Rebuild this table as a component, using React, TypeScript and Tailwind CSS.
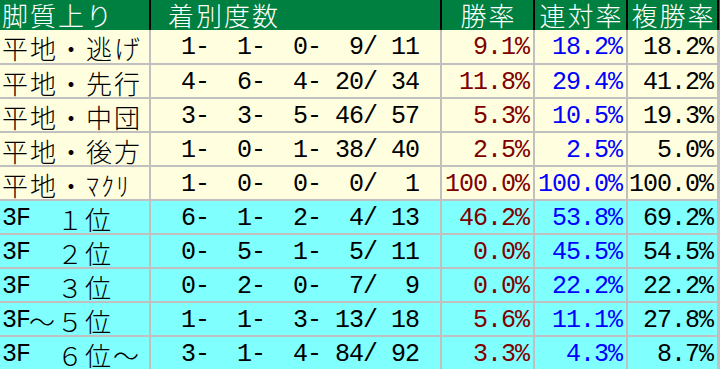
const jp = "font-['MS_Gothic','Noto_Sans_CJK_JP',sans-serif] font-light";
const mono = "font-['Liberation_Mono',monospace] text-[25px] tracking-[-1px]";

type Row = {
  pre?: string;
  label: string;
  counts: string;
  win: string;
  ren: string;
  fuku: string;
  cyan?: boolean;
};

const rows: Row[] = [
  { label: "平地・逃げ", counts: "  1-  1-  0-  9/ 11", win: "9.1%", ren: "18.2%", fuku: "18.2%" },
  { label: "平地・先行", counts: "  4-  6-  4- 20/ 34", win: "11.8%", ren: "29.4%", fuku: "41.2%" },
  { label: "平地・中団", counts: "  3-  3-  5- 46/ 57", win: "5.3%", ren: "10.5%", fuku: "19.3%" },
  { label: "平地・後方", counts: "  1-  0-  1- 38/ 40", win: "2.5%", ren: "2.5%", fuku: "5.0%" },
  { label: "平地・ﾏｸﾘ", counts: "  1-  0-  0-  0/  1", win: "100.0%", ren: "100.0%", fuku: "100.0%" },
  { pre: "3F", label: "　１位", counts: "  6-  1-  2-  4/ 13", win: "46.2%", ren: "53.8%", fuku: "69.2%", cyan: true },
  { pre: "3F", label: "　２位", counts: "  0-  5-  1-  5/ 11", win: "0.0%", ren: "45.5%", fuku: "54.5%", cyan: true },
  { pre: "3F", label: "　３位", counts: "  0-  2-  0-  7/  9", win: "0.0%", ren: "22.2%", fuku: "22.2%", cyan: true },
  { pre: "3F", label: "～５位", counts: "  1-  1-  3- 13/ 18", win: "5.6%", ren: "11.1%", fuku: "27.8%", cyan: true },
  { pre: "3F", label: "　６位～", counts: "  3-  1-  4- 84/ 92", win: "3.3%", ren: "4.3%", fuku: "8.7%", cyan: true },
];

function HeaderRow() {
  const cell = "h-full flex items-center border-r-2 border-black text-white text-[26px] tracking-[2px] leading-[30px] " + jp;
  return (
    <div className="flex h-[30px] bg-[#008040]">
      <div className={cell + " w-[151px] pl-[2px]"}>脚質上り</div>
      <div className={cell + " w-[291px] pl-[17px]"}>着別度数</div>
      <div className={cell + " w-[93px] justify-center pl-[2px]"}>勝率</div>
      <div className={cell + " w-[93px] justify-center pl-[2px]"}>連対率</div>
      <div className={cell + " w-[91px] justify-center pl-[2px]"}>複勝率</div>
    </div>
  );
}

function BodyRow({ row, first }: { row: Row; first: boolean }) {
  const bg = row.cyan ? "bg-[#80ffff]" : "bg-[#ffffe0]";
  const h = first ? "h-[33px]" : "h-[34px] border-t-2 border-[#c0c0c0]";
  const cell = "h-full flex items-center pt-[3px] border-r-2 border-[#c0c0c0] leading-[28px] whitespace-pre";
  const num = cell + " justify-end pr-[4px] " + mono;
  return (
    <div className={"flex " + h}>
      <div className={cell + " w-[151px] pl-[2px] text-[26px] tracking-[2px] text-black " + bg + " " + jp}>
        {row.pre && <span className={mono + " tracking-[-1px] mr-[-1px]"}>{row.pre}</span>}
        {row.label}
      </div>
      <div className={cell + " w-[291px] pl-[2px] text-black " + bg + " " + mono}>{row.counts}</div>
      <div className={num + " w-[93px] text-[#800000] " + bg}>{row.win}</div>
      <div className={num + " w-[93px] text-[#0000ff] " + bg}>{row.ren}</div>
      <div className={num + " w-[91px] text-black " + bg}>{row.fuku}</div>
    </div>
  );
}

export default function App() {
  return (
    <div className="w-[720px] h-[369px] overflow-hidden bg-[#c0c0c0]">
      <HeaderRow />
      {rows.map((r, i) => (
        <BodyRow key={i} row={r} first={i === 0} />
      ))}
    </div>
  );
}
